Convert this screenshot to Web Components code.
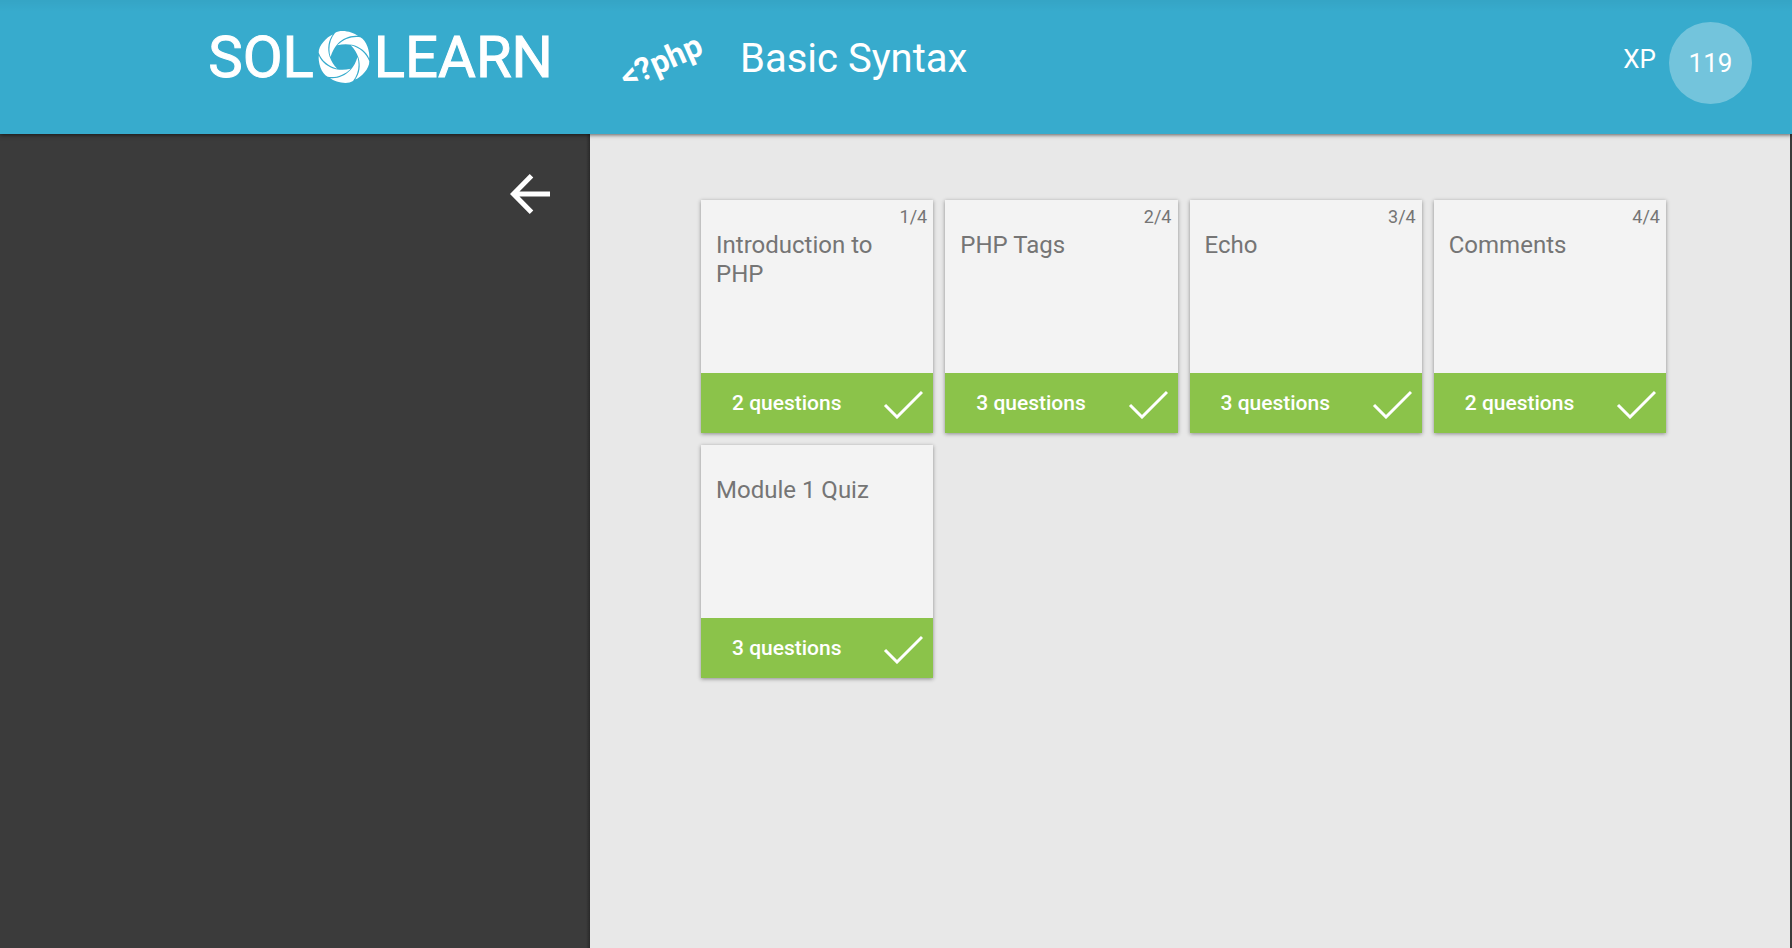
<!DOCTYPE html>
<html lang="en">
<head>
<meta charset="utf-8">
<meta name="viewport" content="width=device-width, initial-scale=1">
<title>Basic Syntax - SoloLearn</title>
<style>
  html, body { margin: 0; height: 100%; }
  body { font-family: Roboto, "Noto Sans", sans-serif; background: #3b3b3b; --bar: #37abcd; --side: 590px; }
</style>
</head>
<body>
<course-page>
  <course-header slot="header" xp="119">Basic Syntax</course-header>
  <side-panel slot="side"></side-panel>
  <lesson-grid>
    <lesson-card position="1/4" questions="2">Introduction to PHP</lesson-card>
    <lesson-card position="2/4" questions="3">PHP Tags</lesson-card>
    <lesson-card position="3/4" questions="3">Echo</lesson-card>
    <lesson-card position="4/4" questions="2">Comments</lesson-card>
    <lesson-card questions="3">Module 1 Quiz</lesson-card>
  </lesson-grid>
</course-page>
<script>
  class BaseElement extends HTMLElement {
    connectedCallback() {
      if (!this.shadowRoot) this.attachShadow({ mode: 'open' }).innerHTML = this.render();
    }
  }

  customElements.define('course-page', class extends BaseElement {
    render() {
      return `<style>
        :host { display: flex; flex-direction: column; min-height: 100vh; }
        .body { flex: 1; display: flex; }
        main { flex: 1; min-width: 0; background: #e8e8e8; margin-right: 2px; }
      </style>
      <slot name="header"></slot>
      <div class="body"><slot name="side"></slot><main><slot></slot></main></div>`;
    }
  });

  customElements.define('solo-logo', class extends BaseElement {
    render() {
      const blades = [0, 60, 120, 180, 240, 300].map(a =>
        `<path transform="rotate(${a})" d="M14-21C9-25-3-28-9-24C-14-18-16-9-13.500 0C-12-5-10-9-6.500-13C-1-19 7-22 14-21Z"/>`).join('');
      return `<style>
        :host { display: block; }
        a { display: flex; align-items: center; color: #fff; text-decoration: none; font-size: 58px; line-height: 70px; -webkit-text-stroke: 1px #fff; }
        svg { display: block; margin: 0 3px; }
      </style>
      <a href="#"><span>SOL</span><svg width="54" height="54" viewBox="-27 -27 54 54" fill="#fff" aria-hidden="true">${blades}</svg><span>LEARN</span></a>`;
    }
  });

  customElements.define('course-header', class extends BaseElement {
    render() {
      return `<style>
        :host { display: block; position: relative; }
        header { display: flex; height: 134px; box-sizing: border-box; padding: 22px 40px 0 0; color: #fff;
          background: linear-gradient(rgba(0,0,0,.04), transparent 12px) var(--bar);
          box-shadow: 0 1px 4px rgba(0,0,0,.6); }
        .brand { flex: 0 0 var(--side); box-sizing: border-box; padding-right: 37px; display: flex; justify-content: flex-end; }
        .tag { width: 150px; box-sizing: border-box; padding: 21px 0 0 28px; }
        .tag span { display: inline-block; font-size: 32px; line-height: 36px; font-weight: 700; transform: rotate(-24deg); }
        h1 { flex: 1; margin: 0; font-weight: 400; font-size: 40px; line-height: 74px; }
        .xp { display: flex; gap: 13px; font-size: 26px; }
        .xp span { line-height: 74px; }
        .xp b { width: 83px; height: 82px; border-radius: 50%; background: rgba(255,255,255,.3); font-weight: 400; line-height: 82px; text-align: center; }
      </style>
      <header>
        <div class="brand"><solo-logo></solo-logo></div>
        <div class="tag"><span>&lt;?php</span></div>
        <h1><slot></slot></h1>
        <div class="xp"><span>XP</span><b>${this.getAttribute('xp')}</b></div>
      </header>`;
    }
  });

  customElements.define('side-panel', class extends BaseElement {
    render() {
      return `<style>
        :host { display: flex; justify-content: flex-end; flex: 0 0 var(--side); box-sizing: border-box; padding: 40px 40px 0 0;
          background: linear-gradient(to left, rgba(0,0,0,.3), transparent 4px) #3b3b3b; }
        button { width: 40px; height: 40px; padding: 0; border: 0; background: none; cursor: pointer; }
        svg { display: block; }
      </style>
      <button type="button" aria-label="Back"><svg width="40" height="40" viewBox="0 0 40 40" fill="none" stroke="#fff" stroke-width="5"><path d="M21.500 1.800L3.500 20L21.500 38.200M4 20H40"/></svg></button>`;
    }
  });

  customElements.define('lesson-grid', class extends BaseElement {
    render() {
      return `<style>
        :host { display: grid; grid-template-columns: repeat(4, 1fr); gap: 12px; padding: 66px 124px 66px 111px; }
      </style><slot></slot>`;
    }
  });

  customElements.define('lesson-card', class extends BaseElement {
    render() {
      return `<style>
        :host { display: block; }
        a { display: flex; flex-direction: column; min-height: 233px; background: #f3f3f3; color: #757575; text-decoration: none; box-shadow: 0 1px 4px rgba(0,0,0,.4); }
        .pos { height: 22px; padding: 6px 6px 0 0; text-align: right; font-size: 18px; line-height: 22px; }
        h2 { flex: 1; margin: 0; padding: 3px 15px 0; font-weight: 400; font-size: 24px; line-height: 29px; }
        .foot { display: flex; justify-content: space-between; align-items: center; height: 60px; padding: 0 10px 0 31px; background: #8bc34a; color: #fff; font-size: 21px; font-weight: 500; }
      </style>
      <a href="#">
        <div class="pos">${this.getAttribute('position') || ''}</div>
        <h2><slot></slot></h2>
        <div class="foot"><span>${this.getAttribute('questions')} questions</span>
          <svg width="40" height="32" viewBox="0 0 40 32" fill="none" stroke="#fff" stroke-width="3" aria-hidden="true"><path d="M2 18L14 30L39 5"/></svg>
        </div>
      </a>`;
    }
  });
</script>
</body>
</html>
